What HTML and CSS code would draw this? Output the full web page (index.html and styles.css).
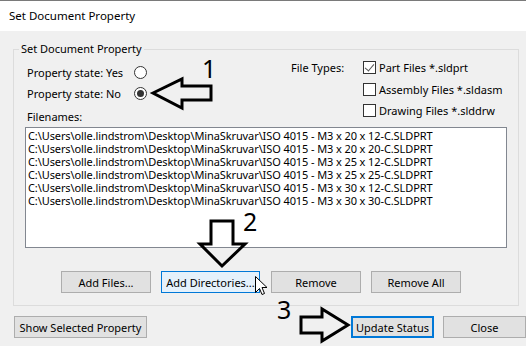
FILE: index.html
```html
<!DOCTYPE html>
<html lang="en">
<head>
  <meta charset="UTF-8" />
  <title>Set Document Property</title>
  <link rel="stylesheet" href="styles.css">
</head>
<body>
  <div class="window">
    <div class="titlebar">Set Document Property</div>

    <div class="content">
      <fieldset class="group">
        <legend>Set Document Property</legend>

        <div class="options">
          <div class="states">
            <div class="state-row">
              <span class="state-label">Property state: Yes</span>
              <span class="radio"></span>
            </div>
            <div class="state-row">
              <span class="state-label">Property state: No</span>
              <span class="radio checked"></span>
            </div>
            <div class="files-label">Filenames:</div>
          </div>

          <div class="types">
            <div class="types-label">File Types:</div>
            <div class="type-list">
              <div class="type-row"><span class="check checked"></span>Part Files *.sldprt</div>
              <div class="type-row"><span class="check"></span>Assembly Files *.sldasm</div>
              <div class="type-row"><span class="check"></span>Drawing Files *.slddrw</div>
            </div>
          </div>
        </div>

        <div class="listbox">
          <div>C:\Users\olle.lindstrom\Desktop\MinaSkruvar\ISO 4015 - M3 x 20 x 12-C.SLDPRT</div>
          <div>C:\Users\olle.lindstrom\Desktop\MinaSkruvar\ISO 4015 - M3 x 20 x 20-C.SLDPRT</div>
          <div>C:\Users\olle.lindstrom\Desktop\MinaSkruvar\ISO 4015 - M3 x 25 x 12-C.SLDPRT</div>
          <div>C:\Users\olle.lindstrom\Desktop\MinaSkruvar\ISO 4015 - M3 x 25 x 25-C.SLDPRT</div>
          <div>C:\Users\olle.lindstrom\Desktop\MinaSkruvar\ISO 4015 - M3 x 30 x 12-C.SLDPRT</div>
          <div>C:\Users\olle.lindstrom\Desktop\MinaSkruvar\ISO 4015 - M3 x 30 x 30-C.SLDPRT</div>
        </div>

        <div class="list-buttons">
          <button class="btn w90">Add Files...</button>
          <button class="btn w100 hover">Add Directories...</button>
          <button class="btn w90">Remove</button>
          <button class="btn w90">Remove All</button>
        </div>
      </fieldset>

      <div class="dialog-buttons">
        <button class="btn show">Show Selected Property</button>
        <div class="spacer"></div>
        <button class="btn w83 focused">Update Status</button>
        <button class="btn w83">Close</button>
      </div>
    </div>

    <!-- annotations drawn over the dialog -->
    <span class="step step1">1</span>
    <span class="step step2">2</span>
    <span class="step step3">3</span>
    <svg class="marks" width="526" height="346" viewBox="0 0 526 346">
      <g fill="none" stroke="#000" stroke-width="3" stroke-linejoin="miter">
        <polygon points="153,93 182,79 182,86 211,86 211,100 182,100 182,108" />
        <polygon points="211,221 233,221 233,244 245,244 222,266 200,244 211,244" />
        <polygon points="301,317 322,317 322,309 348,325 322,341 322,333 301,333" />
      </g>
      <path d="M255.5,276.5 L255.5,292.5 L259.5,288.5 L262,294.5 L264.5,293.5 L262,287.5 L267,287.5 Z" fill="#fff" stroke="#000" stroke-width="1" />
    </svg>
  </div>
</body>
</html>
```

FILE: styles.css
```css
body {
  margin: 0;
  font-family: "Noto Sans", "Liberation Sans", sans-serif;
  font-size: 11px;
  color: #000;
}

.window {
  position: relative;
  width: 526px;
  height: 346px;
  background: #f0f0f0;
  overflow: hidden;
}

.titlebar {
  height: 30px;
  line-height: 30px;
  border-top: 1px solid #7a7a7a;
  background: #fff;
  padding-left: 9px;
  font-size: 11.5px;
}

.content {
  padding: 10px 0 0 13px;
  border-left: 1px solid #6e6e6e;
  margin-left: -1px;
}

.group {
  margin: 0;
  padding: 0 0 12px 0;
  width: 504px;
  border: 1px solid #dcdcdc;
}

.group legend {
  margin-left: 5px;
  padding: 0 2px;
  line-height: 16px;
}

.options {
  display: flex;
}

.states {
  width: 264px;
  padding: 5px 0 0 13px;
}

.state-row {
  display: flex;
  align-items: center;
  height: 21px;
}

.state-label {
  width: 107px;
}

.radio {
  width: 11px;
  height: 11px;
  border: 1px solid #333;
  border-radius: 50%;
  background: #fff;
  display: flex;
  align-items: center;
  justify-content: center;
}

.radio.checked::after {
  content: "";
  width: 7px;
  height: 7px;
  border-radius: 50%;
  background: #333;
}

.files-label {
  margin-top: 5px;
  line-height: 16px;
}

.types {
  display: flex;
}

.types-label {
  width: 72px;
  line-height: 22px;
}

.type-row {
  display: flex;
  align-items: center;
  height: 21.5px;
}

.check {
  position: relative;
  width: 11px;
  height: 11px;
  border: 1px solid #333;
  background: #fff;
  margin-right: 3px;
}

.check.checked::after {
  content: "";
  position: absolute;
  left: 3px;
  top: 0px;
  width: 4px;
  height: 8px;
  border: solid #555;
  border-width: 0 1.5px 1.5px 0;
  transform: rotate(40deg);
}

.listbox {
  margin: 2px 0 0 11px;
  width: 476px;
  height: 117px;
  padding: 1px 2px 1px 2px;
  background: #fff;
  border: 1px solid #828790;
  line-height: 13px;
  letter-spacing: -0.1px;
  white-space: nowrap;
}

.list-buttons {
  display: flex;
  gap: 10px;
  margin: 23px 0 0 47px;
}

.btn {
  height: 22px;
  padding: 0;
  font-family: inherit;
  font-size: 11px;
  color: #000;
  background: #e1e1e1;
  border: 1px solid #adadad;
  white-space: nowrap;
}

.w90 { width: 90px; }
.w100 { width: 99px; margin-right: 1px; }
.w83 { width: 83px; }

.btn.hover {
  background: #e5f1fb;
  border-color: #0078d7;
}

.btn.focused {
  border: 2px solid #0078d7;
}

.dialog-buttons {
  display: flex;
  gap: 9px;
  margin-top: 10px;
  padding-left: 1px;
}

.spacer {
  flex: 1;
}

.btn.show {
  width: 133px;
}

.step {
  position: absolute;
  font-size: 25px;
  line-height: 25px;
}

.step1 { left: 202px; top: 56px; }
.step2 { left: 243px; top: 209px; }
.step3 { left: 277px; top: 297px; }

.marks {
  position: absolute;
  left: 0;
  top: 0;
  pointer-events: none;
}
```
